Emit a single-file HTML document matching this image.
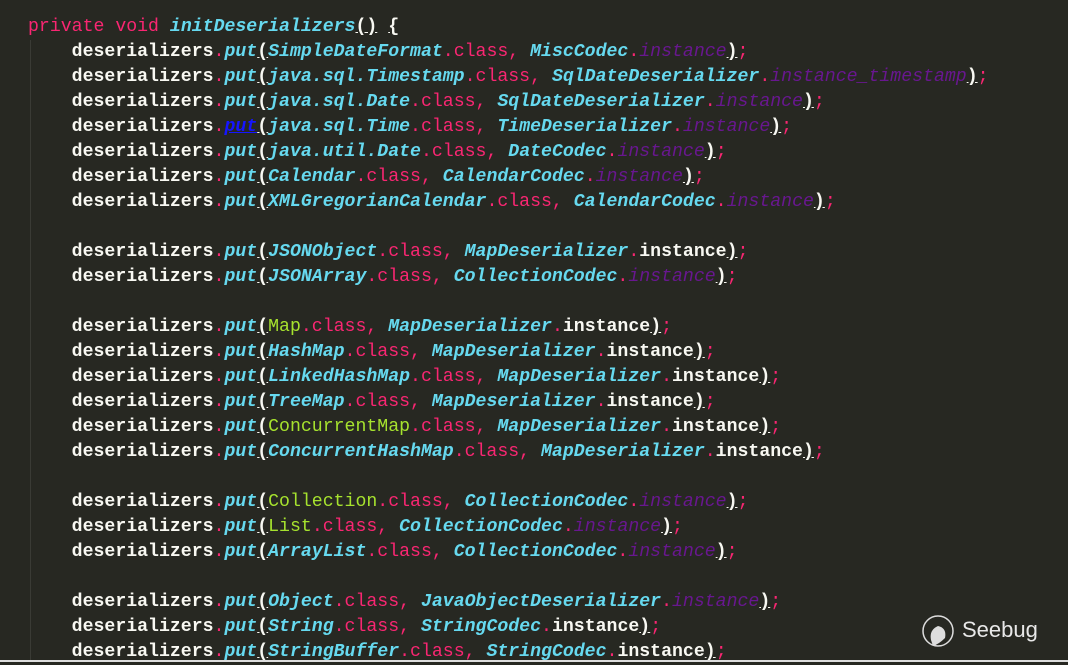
<!DOCTYPE html><html><head><style>
body{margin:0;width:1068px;height:662px;background:#272822;overflow:hidden;position:relative}
pre{margin:0;padding:15px 0 0 28px;font:bold 18.2px/25px "Liberation Mono",monospace;color:#f8f8f2;white-space:pre}
.k{color:#f92672;font-weight:normal}
.p{color:#f92672;font-weight:normal}
.c{color:#66d9ef;font-style:italic}
.v{color:#68178f;font-style:italic;font-weight:normal}
.g{color:#a6e22e;font-weight:normal}
.u{text-decoration:underline}
.b{color:#1515ff;font-style:italic;text-decoration:underline}
.guide{position:absolute;left:30px;top:40px;width:1px;height:622px;background:#3a3b35}
.bot{position:absolute;left:0;bottom:0;width:1068px;height:2px;background:#ddd}
.logo{position:absolute;color:#e8e8e8;font:22px "Liberation Sans",sans-serif}
</style></head><body>
<div class="guide"></div>
<pre><span class="k">private void</span> <span class="c">initDeserializers</span><span class="u">()</span> <span class="u">{</span>
    deserializers<span class="p">.</span><span class="c">put</span><span class="u">(</span><span class="c">SimpleDateFormat</span><span class="p">.class, </span><span class="c">MiscCodec</span><span class="p">.</span><span class="v">instance</span><span class="u">)</span><span class="p">;</span>
    deserializers<span class="p">.</span><span class="c">put</span><span class="u">(</span><span class="c">java.sql.Timestamp</span><span class="p">.class, </span><span class="c">SqlDateDeserializer</span><span class="p">.</span><span class="v">instance_timestamp</span><span class="u">)</span><span class="p">;</span>
    deserializers<span class="p">.</span><span class="c">put</span><span class="u">(</span><span class="c">java.sql.Date</span><span class="p">.class, </span><span class="c">SqlDateDeserializer</span><span class="p">.</span><span class="v">instance</span><span class="u">)</span><span class="p">;</span>
    deserializers<span class="p">.</span><span class="b">put</span><span class="u">(</span><span class="c">java.sql.Time</span><span class="p">.class, </span><span class="c">TimeDeserializer</span><span class="p">.</span><span class="v">instance</span><span class="u">)</span><span class="p">;</span>
    deserializers<span class="p">.</span><span class="c">put</span><span class="u">(</span><span class="c">java.util.Date</span><span class="p">.class, </span><span class="c">DateCodec</span><span class="p">.</span><span class="v">instance</span><span class="u">)</span><span class="p">;</span>
    deserializers<span class="p">.</span><span class="c">put</span><span class="u">(</span><span class="c">Calendar</span><span class="p">.class, </span><span class="c">CalendarCodec</span><span class="p">.</span><span class="v">instance</span><span class="u">)</span><span class="p">;</span>
    deserializers<span class="p">.</span><span class="c">put</span><span class="u">(</span><span class="c">XMLGregorianCalendar</span><span class="p">.class, </span><span class="c">CalendarCodec</span><span class="p">.</span><span class="v">instance</span><span class="u">)</span><span class="p">;</span>

    deserializers<span class="p">.</span><span class="c">put</span><span class="u">(</span><span class="c">JSONObject</span><span class="p">.class, </span><span class="c">MapDeserializer</span><span class="p">.</span>instance<span class="u">)</span><span class="p">;</span>
    deserializers<span class="p">.</span><span class="c">put</span><span class="u">(</span><span class="c">JSONArray</span><span class="p">.class, </span><span class="c">CollectionCodec</span><span class="p">.</span><span class="v">instance</span><span class="u">)</span><span class="p">;</span>

    deserializers<span class="p">.</span><span class="c">put</span><span class="u">(</span><span class="g">Map</span><span class="p">.class, </span><span class="c">MapDeserializer</span><span class="p">.</span>instance<span class="u">)</span><span class="p">;</span>
    deserializers<span class="p">.</span><span class="c">put</span><span class="u">(</span><span class="c">HashMap</span><span class="p">.class, </span><span class="c">MapDeserializer</span><span class="p">.</span>instance<span class="u">)</span><span class="p">;</span>
    deserializers<span class="p">.</span><span class="c">put</span><span class="u">(</span><span class="c">LinkedHashMap</span><span class="p">.class, </span><span class="c">MapDeserializer</span><span class="p">.</span>instance<span class="u">)</span><span class="p">;</span>
    deserializers<span class="p">.</span><span class="c">put</span><span class="u">(</span><span class="c">TreeMap</span><span class="p">.class, </span><span class="c">MapDeserializer</span><span class="p">.</span>instance<span class="u">)</span><span class="p">;</span>
    deserializers<span class="p">.</span><span class="c">put</span><span class="u">(</span><span class="g">ConcurrentMap</span><span class="p">.class, </span><span class="c">MapDeserializer</span><span class="p">.</span>instance<span class="u">)</span><span class="p">;</span>
    deserializers<span class="p">.</span><span class="c">put</span><span class="u">(</span><span class="c">ConcurrentHashMap</span><span class="p">.class, </span><span class="c">MapDeserializer</span><span class="p">.</span>instance<span class="u">)</span><span class="p">;</span>

    deserializers<span class="p">.</span><span class="c">put</span><span class="u">(</span><span class="g">Collection</span><span class="p">.class, </span><span class="c">CollectionCodec</span><span class="p">.</span><span class="v">instance</span><span class="u">)</span><span class="p">;</span>
    deserializers<span class="p">.</span><span class="c">put</span><span class="u">(</span><span class="g">List</span><span class="p">.class, </span><span class="c">CollectionCodec</span><span class="p">.</span><span class="v">instance</span><span class="u">)</span><span class="p">;</span>
    deserializers<span class="p">.</span><span class="c">put</span><span class="u">(</span><span class="c">ArrayList</span><span class="p">.class, </span><span class="c">CollectionCodec</span><span class="p">.</span><span class="v">instance</span><span class="u">)</span><span class="p">;</span>

    deserializers<span class="p">.</span><span class="c">put</span><span class="u">(</span><span class="c">Object</span><span class="p">.class, </span><span class="c">JavaObjectDeserializer</span><span class="p">.</span><span class="v">instance</span><span class="u">)</span><span class="p">;</span>
    deserializers<span class="p">.</span><span class="c">put</span><span class="u">(</span><span class="c">String</span><span class="p">.class, </span><span class="c">StringCodec</span><span class="p">.</span>instance<span class="u">)</span><span class="p">;</span>
    deserializers<span class="p">.</span><span class="c">put</span><span class="u">(</span><span class="c">StringBuffer</span><span class="p">.class, </span><span class="c">StringCodec</span><span class="p">.</span>instance<span class="u">)</span><span class="p">;</span></pre>
<svg style="position:absolute;left:921px;top:614px" width="36" height="36" viewBox="0 0 36 36"><circle cx="17" cy="17" r="15" fill="none" stroke="#ddd" stroke-width="1.5"/><path d="M10 26 Q8 16 17 12 Q26 14 24 24 Q18 30 12 32 Z" fill="#ddd"/></svg>
<div class="logo" style="left:962px;top:617px">Seebug</div>
<div class="bot"></div>
</body></html>
